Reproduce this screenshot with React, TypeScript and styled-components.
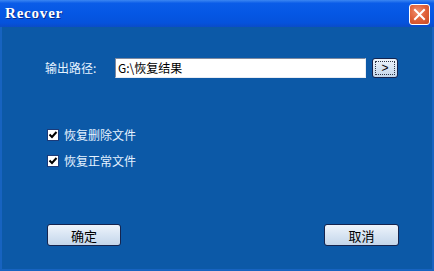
import React from "react";
import styled, { createGlobalStyle } from "styled-components";

const Global = createGlobalStyle`
  html, body { margin: 0; padding: 0; width: 434px; height: 271px; overflow: hidden; }
  body { font-family: "Noto Sans CJK SC", "Liberation Sans", sans-serif; }
`;

const Window = styled.div`
  width: 434px;
  height: 271px;
  display: flex;
  flex-direction: column;
  background: #0c59a7;
  box-sizing: border-box;
  border-left: 2px solid #1763c0;
  border-right: 2px solid #1763c0;
  border-bottom: 2px solid #1763c0;
`;

const TitleBar = styled.div`
  height: 27px;
  flex: none;
  display: flex;
  align-items: center;
  justify-content: space-between;
  padding: 0 4px 0 4px;
  margin: 0 -2px;
  background: linear-gradient(180deg, #3b86f2 0%, #0a5ce8 12%, #0557e4 50%, #0552dc 85%, #0a4cc8 100%);
`;

const Title = styled.span`
  font-family: "Liberation Serif", serif;
  font-weight: bold;
  font-size: 15px;
  letter-spacing: 0.8px;
  color: #ffffff;
  text-shadow: 1px 1px 0 #0a2c8a;
  margin-top: 0px;
  padding-left: 1px;
`;

const CloseBtn = styled.div`
  width: 21px;
  height: 21px;
  box-sizing: border-box;
  border: 1px solid #ffffff;
  border-radius: 3px;
  background: radial-gradient(circle at 40% 35%, #f09070 0%, #e06038 50%, #c84a22 100%);
  display: flex;
  align-items: center;
  justify-content: center;
  margin-top: 1px;
`;

const Body = styled.div`
  flex: 1;
  display: flex;
  flex-direction: column;
  padding: 31px 0 0 43px;
`;

const PathRow = styled.div`
  display: flex;
  align-items: center;
  height: 20px;
`;

const Label = styled.span`
  width: 70px;
  font-size: 12px;
  color: #e4f2ff;
  line-height: 20px;
`;

const PathInput = styled.div`
  width: 251px;
  height: 20px;
  box-sizing: border-box;
  background: #ffffff;
  border-top: 1px solid #7f8aa0;
  border-left: 1px solid #7f8aa0;
  border-right: 1px solid #e8ecf4;
  border-bottom: 1px solid #e8ecf4;
  font-size: 12px;
  color: #000;
  line-height: 18px;
  padding-left: 2px;
  display: flex;
  align-items: center;
`;

const Button = styled.div<{ $w: number; $h: number; $focus?: boolean }>`
  width: ${(p) => p.$w}px;
  height: ${(p) => p.$h}px;
  box-sizing: border-box;
  border: 1px solid #15244e;
  border-radius: 3px;
  background: linear-gradient(180deg, #eef4fb 0%, #d8e5f3 50%, #c4d6ea 100%);
  display: flex;
  align-items: center;
  justify-content: center;
  font-size: 13px;
  color: #000;
  position: relative;
  ${(p) =>
    p.$focus
      ? `&::after { content: ""; position: absolute; inset: 2px; border: 1px dotted #303848; }`
      : ""}
`;

const BrowseButton = styled(Button)`
  margin-left: 6px;
  font-family: "Liberation Sans", sans-serif;
  font-size: 12px;
`;

const Checks = styled.div`
  display: flex;
  flex-direction: column;
  gap: 12px;
  margin-top: 50px;
  margin-left: 2px;
`;

const CheckRow = styled.div`
  display: flex;
  align-items: center;
  gap: 5px;
  height: 14px;
`;

const Box = styled.span`
  width: 12px;
  height: 12px;
  box-sizing: border-box;
  background: #ffffff;
  border: 1px solid #1c3a78;
  display: flex;
  align-items: center;
  justify-content: center;
`;

const CheckText = styled.span`
  font-size: 12px;
  color: #e4f2ff;
  line-height: 14px;
`;

const Footer = styled.div`
  display: flex;
  justify-content: space-between;
  margin-top: 56px;
  margin-left: 2px;
  width: 352px;
`;

const Check = () => (
  <Box>
    <svg width="10" height="10" viewBox="0 0 10 10">
      <path d="M1.5 4.5 L4 7 L8.5 2" stroke="#000" strokeWidth="2" fill="none" />
    </svg>
  </Box>
);

export default function App() {
  return (
    <>
      <Global />
      <Window>
        <TitleBar>
          <Title>Recover</Title>
          <CloseBtn>
            <svg width="13" height="13" viewBox="0 0 13 13">
              <path d="M2 2 L11 11 M11 2 L2 11" stroke="#fff" strokeWidth="2" strokeLinecap="square" />
            </svg>
          </CloseBtn>
        </TitleBar>
        <Body>
          <PathRow>
            <Label>输出路径:</Label>
            <PathInput>G:\恢复结果</PathInput>
            <BrowseButton $w={26} $h={20} $focus>
              &gt;
            </BrowseButton>
          </PathRow>
          <Checks>
            <CheckRow>
              <Check />
              <CheckText>恢复删除文件</CheckText>
            </CheckRow>
            <CheckRow>
              <Check />
              <CheckText>恢复正常文件</CheckText>
            </CheckRow>
          </Checks>
          <Footer>
            <Button $w={74} $h={22}>确定</Button>
            <Button $w={75} $h={22}>取消</Button>
          </Footer>
        </Body>
      </Window>
    </>
  );
}
